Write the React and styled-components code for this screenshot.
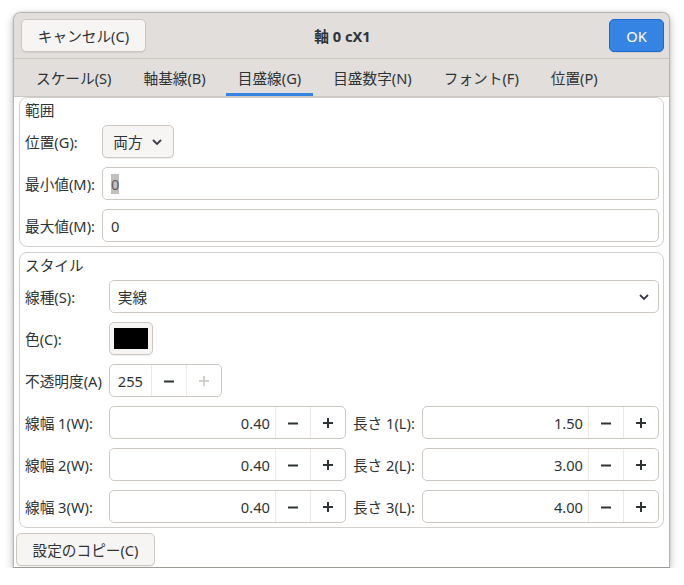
import React from "react";
import styled, { createGlobalStyle } from "styled-components";

const GlobalStyle = createGlobalStyle`
  html, body { margin: 0; padding: 0; background: #ffffff; }
  body {
    font-family: "Noto Sans", "Noto Sans CJK JP", sans-serif;
    font-size: 14.67px;
    color: #2e3436;
  }
  * { box-sizing: border-box; }
`;

const Page = styled.div`
  padding: 12px 0 0 13px;
`;

const Window = styled.div`
  width: 657px;
  border: 1px solid #b8b3ae;
  border-bottom-color: #9e9a96;
  border-radius: 8px 8px 0 0;
  background: #ffffff;
  box-shadow: 0 3px 9px rgba(0, 0, 0, 0.28), 0 0 2px rgba(0, 0, 0, 0.12);
  display: flex;
  flex-direction: column;
  overflow: hidden;
`;

const HeaderBar = styled.div`
  height: 46px;
  background: #e1dedb;
  border-bottom: 1px solid #cdc7c2;
  display: grid;
  grid-template-columns: 1fr auto 1fr;
  align-items: center;
  padding: 0 5px 0 7px;
`;

const Title = styled.div`
  font-weight: bold;
  color: #2e3436;
`;

const Button = styled.button`
  font: inherit;
  height: 33px;
  padding: 0 ${(p) => p.$px || 15}px;
  border-radius: 5px;
  border: 1px solid ${(p) => (p.$primary ? "#1b6acb" : "#cdc7c2")};
  background: ${(p) => (p.$primary ? "#3584e4" : "#f6f5f4")};
  color: ${(p) => (p.$primary ? "#ffffff" : "#2e3436")};
  box-shadow: 0 1px 1px rgba(0, 0, 0, 0.07);
  justify-self: ${(p) => p.$align || "start"};
  width: ${(p) => (p.$w ? p.$w + "px" : "auto")};
  display: inline-flex;
  align-items: center;
  justify-content: center;
  gap: 8px;
  white-space: nowrap;
  cursor: default;
`;

const TabBar = styled.div`
  height: 38px;
  background: #e1dedb;
  display: flex;
  gap: 8px;
  padding: 0 10px;
  border-bottom: 1px solid #cdc7c2;
`;

const Tab = styled.div`
  padding: 3px 12px 0;
  display: flex;
  align-items: center;
  white-space: nowrap;
  color: #2e3436;
  border-bottom: 3px solid ${(p) => (p.$active ? "#3584e4" : "transparent")};
`;

const Body = styled.div`
  display: flex;
  flex-direction: column;
`;

const Frames = styled.div`
  display: flex;
  flex-direction: column;
  gap: 5px;
  padding: 0 5px;
`;

const Frame = styled.div`
  border: 1px solid #d3cec9;
  border-radius: 8px;
  padding: 0 4px 4px 5px;
  display: flex;
  flex-direction: column;
`;

const FrameTitle = styled.div`
  height: 24px;
  line-height: 24px;
  margin-bottom: 3px;
`;

const Grid = styled.div`
  display: grid;
  grid-template-columns: ${(p) => p.$cols};
  grid-auto-rows: 33px;
  column-gap: 7px;
  row-gap: 9px;
  align-items: center;
`;

const Label = styled.div`
  white-space: nowrap;
  color: #2e3436;
`;

const Entry = styled.div`
  height: 33px;
  border: 1px solid #cdc7c2;
  border-radius: 5px;
  background: #ffffff;
  display: flex;
  align-items: center;
  padding: 0 8px;
  grid-column: ${(p) => p.$span || "auto"};
  justify-content: space-between;
`;

const Selected = styled.span`
  background: #c0bfbc;
  color: #5e5c64;
  line-height: 20px;
`;

const Spin = styled.div`
  height: 33px;
  border: 1px solid #cdc7c2;
  border-radius: 5px;
  background: #ffffff;
  display: flex;
  align-items: stretch;
  justify-self: ${(p) => (p.$compact ? "start" : "stretch")};
  grid-column: ${(p) => p.$span || "auto"};
`;

const SpinValue = styled.div`
  flex: ${(p) => (p.$compact ? "0 0 auto" : "1")};
  display: flex;
  align-items: center;
  justify-content: ${(p) => (p.$compact ? "flex-start" : "flex-end")};
  padding: ${(p) => (p.$compact ? "0 8px" : "0 5px 0 8px")};
`;

const SpinBtn = styled.div`
  width: 35px;
  border-left: 1px solid #ebe9e6;
  display: flex;
  align-items: center;
  justify-content: center;
  color: ${(p) => (p.$disabled ? "#d3d1ce" : "#2e3436")};
`;

const ColorButton = styled.div`
  width: 44px;
  height: 33px;
  border: 1px solid #cdc7c2;
  border-radius: 5px;
  background: #f6f5f4;
  padding: 5px 4px;
  justify-self: start;
  grid-column: 2 / -1;
  box-shadow: 0 1px 1px rgba(0, 0, 0, 0.07);
`;

const Swatch = styled.div`
  width: 100%;
  height: 100%;
  background: #000000;
`;

const Footer = styled.div`
  padding: 5px 0 1px 2px;
`;

const Minus = () => (
  <svg width="12" height="12" viewBox="0 0 12 12">
    <line x1="1" y1="6.5" x2="11" y2="6.5" stroke="currentColor" strokeWidth="2" />
  </svg>
);
const Plus = () => (
  <svg width="12" height="12" viewBox="0 0 12 12">
    <line x1="1" y1="6" x2="11" y2="6" stroke="currentColor" strokeWidth="2" />
    <line x1="6" y1="1" x2="6" y2="11" stroke="currentColor" strokeWidth="2" />
  </svg>
);
const Chevron = () => (
  <svg width="12" height="12" viewBox="0 0 12 12">
    <polyline points="2,4 6,8 10,4" fill="none" stroke="#3d3846" strokeWidth="1.8" />
  </svg>
);

const SpinBox = ({ value, compact, plusDisabled, span }) => (
  <Spin $compact={compact} $span={span}>
    <SpinValue $compact={compact}>{value}</SpinValue>
    <SpinBtn><Minus /></SpinBtn>
    <SpinBtn $disabled={plusDisabled}><Plus /></SpinBtn>
  </Spin>
);

const tabs = ["スケール(S)", "軸基線(B)", "目盛線(G)", "目盛数字(N)", "フォント(F)", "位置(P)"];

const widths = [
  ["線幅 1(W):", "0.40", "長さ 1(L):", "1.50"],
  ["線幅 2(W):", "0.40", "長さ 2(L):", "3.00"],
  ["線幅 3(W):", "0.40", "長さ 3(L):", "4.00"],
];

export default function App() {
  return (
    <>
      <GlobalStyle />
      <Page>
        <Window>
          <HeaderBar>
            <Button $w={125}>キャンセル(C)</Button>
            <Title>軸 0 cX1</Title>
            <Button $primary $w={55} $align="end">OK</Button>
          </HeaderBar>
          <TabBar>
            {tabs.map((t, i) => (
              <Tab key={t} $active={i === 2}>{t}</Tab>
            ))}
          </TabBar>
          <Body>
            <Frames>
              <Frame>
                <FrameTitle>範囲</FrameTitle>
                <Grid $cols="auto 1fr">
                  <Label>位置(G):</Label>
                  <Button $px={10} $w={72}>両方 <Chevron /></Button>
                  <Label>最小値(M):</Label>
                  <Entry><Selected>0</Selected></Entry>
                  <Label>最大値(M):</Label>
                  <Entry>0</Entry>
                </Grid>
              </Frame>
              <Frame>
                <FrameTitle>スタイル</FrameTitle>
                <Grid $cols="auto 1fr auto 1fr">
                  <Label>線種(S):</Label>
                  <Entry $span="2 / -1">実線 <Chevron /></Entry>
                  <Label>色(C):</Label>
                  <ColorButton><Swatch /></ColorButton>
                  <Label>不透明度(A)</Label>
                  <SpinBox value="255" compact plusDisabled span="2 / -1" />
                  {widths.map((r) => (
                    <React.Fragment key={r[0]}>
                      <Label>{r[0]}</Label>
                      <SpinBox value={r[1]} />
                      <Label>{r[2]}</Label>
                      <SpinBox value={r[3]} />
                    </React.Fragment>
                  ))}
                </Grid>
              </Frame>
            </Frames>
            <Footer>
              <Button $w={139}>設定のコピー(C)</Button>
            </Footer>
          </Body>
        </Window>
      </Page>
    </>
  );
}
